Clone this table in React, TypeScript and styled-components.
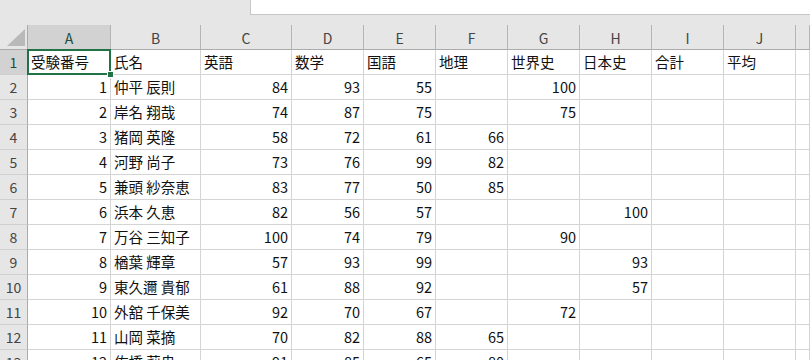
import styled, { createGlobalStyle } from 'styled-components';

const GlobalStyle = createGlobalStyle`
  html, body {
    margin: 0;
    padding: 0;
    background: #ffffff;
    overflow: hidden;
  }
`;

const COLUMNS = ['A', 'B', 'C', 'D', 'E', 'F', 'G', 'H', 'I', 'J', ''];

// A は右寄せ, B は左寄せ, C 以降の数値は右寄せ
const HEADER = ['受験番号', '氏名', '英語', '数学', '国語', '地理', '世界史', '日本史', '合計', '平均'];

const ROWS: string[][] = [
  ['1', '仲平 辰則', '84', '93', '55', '', '100', '', '', ''],
  ['2', '岸名 翔哉', '74', '87', '75', '', '75', '', '', ''],
  ['3', '猪岡 英隆', '58', '72', '61', '66', '', '', '', ''],
  ['4', '河野 尚子', '73', '76', '99', '82', '', '', '', ''],
  ['5', '兼頭 紗奈恵', '83', '77', '50', '85', '', '', '', ''],
  ['6', '浜本 久恵', '82', '56', '57', '', '', '100', '', ''],
  ['7', '万谷 三知子', '100', '74', '79', '', '90', '', '', ''],
  ['8', '楢葉 輝章', '57', '93', '99', '', '', '93', '', ''],
  ['9', '東久邇 貴郁', '61', '88', '92', '', '', '57', '', ''],
  ['10', '外舘 千保美', '92', '70', '67', '', '72', '', '', ''],
  ['11', '山岡 菜摘', '70', '82', '88', '65', '', '', '', ''],
  ['12', '佐橋 莉央', '91', '85', '65', '80', '', '', '', ''],
];

export default function App() {
  return (
    <>
      <GlobalStyle />
      <Window>
        <TopBar>
          <FormulaBox />
        </TopBar>
        <Sheet>
          <Corner>
            <svg width="18" height="17" viewBox="0 0 18 17">
              <polygon points="18,0 18,17 0,17" fill="#b9b9b9" />
            </svg>
          </Corner>
          {COLUMNS.map((c, i) => (
            <ColHead key={'h' + i} $selected={i === 0}>{c}</ColHead>
          ))}

          <RowHead $selected>1</RowHead>
          {HEADER.map((t, i) => (
            <Cell key={'t' + i} $active={i === 0}>
              {t}
              {i === 0 && <Handle />}
            </Cell>
          ))}
          <Cell />

          {ROWS.map((row, r) => (
            <Row key={r} index={r + 2} values={row} />
          ))}
        </Sheet>
      </Window>
    </>
  );
}

const Row = ({ index, values }: { index: number; values: string[] }) => (
  <>
    <RowHead>{index}</RowHead>
    {values.map((v, i) => (
      <Cell key={i} $right={i !== 1}>{v}</Cell>
    ))}
    <Cell />
  </>
);

const Window = styled.div({
  width: '810px',
  height: '360px',
  overflow: 'hidden',
  background: '#e6e6e6',
  fontFamily: '"Noto Sans CJK JP", "Noto Sans", sans-serif',
});

const TopBar = styled.div({
  height: '25px',
  display: 'flex',
  alignItems: 'flex-start',
});

const FormulaBox = styled.div({
  marginLeft: '250px',
  flex: 1,
  height: '15px',
  background: '#ffffff',
  borderLeft: '1px solid #c6c6c6',
  borderBottom: '1px solid #c6c6c6',
  boxSizing: 'border-box',
});

const Sheet = styled.div({
  display: 'grid',
  gridTemplateColumns: '28px 83px 90px 91px 72px 72px 72px 72px 72px 72px 72px 1fr',
  gridAutoRows: '25px',
  background: '#ffffff',
});

const Corner = styled.div({
  background: '#e6e6e6',
  borderRight: '1px solid #ababab',
  borderBottom: '1px solid #ababab',
  boxSizing: 'border-box',
  display: 'flex',
  alignItems: 'flex-end',
  justifyContent: 'flex-end',
  padding: '0 2px 3px 0',

  '& svg': {
    display: 'block',
  },
});

const ColHead = styled.div<{ $selected?: boolean }>`
  box-sizing: border-box;
  background: ${(p) => (p.$selected ? '#d2d2d2' : '#e6e6e6')};
  border-right: 1px solid #b4b4b4;
  border-bottom: 1px solid #ababab;
  display: flex;
  align-items: center;
  justify-content: center;
  font-size: 14px;
  color: ${(p) => (p.$selected ? '#1f4e3a' : '#444444')};
  padding-top: 1px;
`;

const RowHead = styled.div<{ $selected?: boolean }>`
  box-sizing: border-box;
  background: ${(p) => (p.$selected ? '#d2d2d2' : '#e6e6e6')};
  border-right: 1px solid #ababab;
  border-bottom: 1px solid #d0d0d0;
  display: flex;
  align-items: center;
  justify-content: center;
  font-size: 14px;
  color: ${(p) => (p.$selected ? '#1f4e3a' : '#444444')};
`;

const Cell = styled.div<{ $right?: boolean; $active?: boolean }>`
  position: relative;
  box-sizing: border-box;
  border-right: 1px solid #d4d4d4;
  border-bottom: 1px solid #d4d4d4;
  display: flex;
  align-items: center;
  justify-content: ${(p) => (p.$right ? 'flex-end' : 'flex-start')};
  padding: 0 3px 1px 3px;
  font-size: 14.5px;
  color: #111111;
  white-space: nowrap;
  overflow: visible;

  ${(p) =>
    p.$active &&
    `
    &::after {
      content: '';
      position: absolute;
      left: -1px;
      top: -1px;
      right: -1px;
      bottom: -1px;
      border: 2px solid #217346;
      pointer-events: none;
    }
  `}
`;

const Handle = styled.span({
  position: 'absolute',
  right: '-4px',
  bottom: '-4px',
  width: '5px',
  height: '5px',
  background: '#217346',
  border: '1px solid #ffffff',
  zIndex: 2,
});
